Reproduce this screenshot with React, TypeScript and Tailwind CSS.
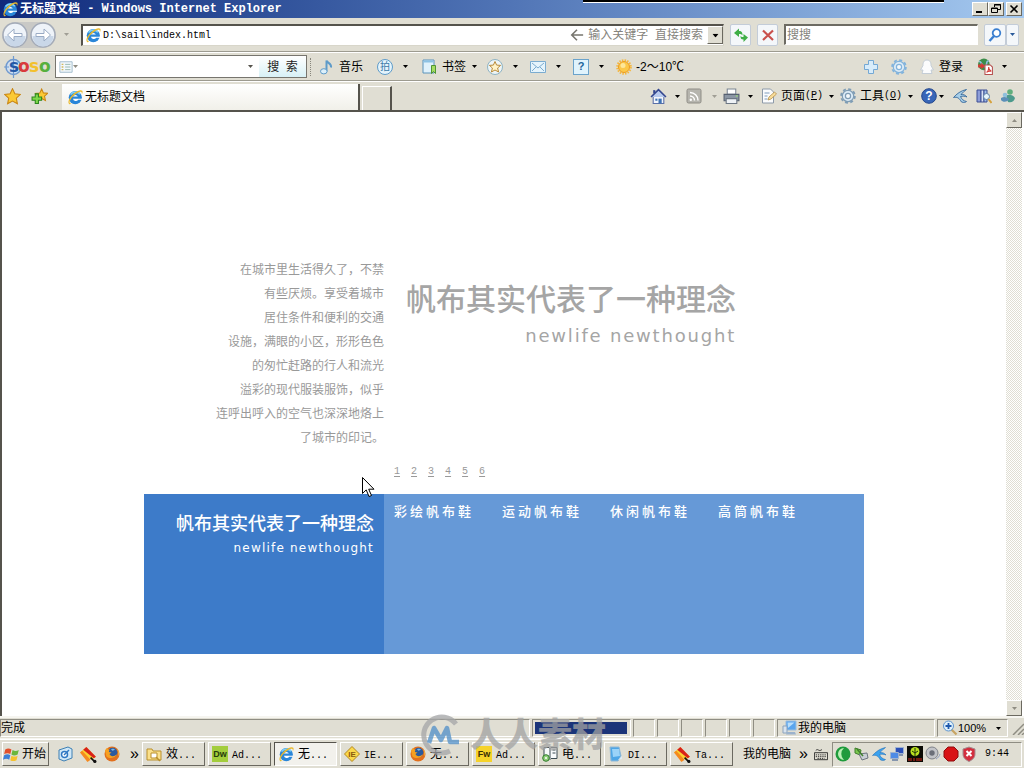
import type { ReactNode } from 'react';
import clsx from 'clsx';

const mono = "font-['Liberation_Mono','Noto_Sans_CJK_SC',monospace] text-[10px]";
const raised = 'border border-t-white border-l-white border-r-[#6b6960] border-b-[#6b6960] bg-[#e0ded3]';
const sunken = 'border border-t-[#8f8d83] border-l-[#8f8d83] border-r-white border-b-white';

function Icon({ children, className }: { children: ReactNode; className?: string }) {
  return (
    <svg viewBox="0 0 16 16" className={clsx('shrink-0', className || 'size-4')} aria-hidden="true">
      {children}
    </svg>
  );
}

function Caret({ className }: { className?: string }) {
  return (
    <svg viewBox="0 0 5 3" className={clsx('h-[3px] w-[5px] shrink-0', className || 'text-black')} aria-hidden="true">
      <path d="M0 0h5L2.5 3z" fill="currentColor" />
    </svg>
  );
}

function IeIcon({ className }: { className?: string }) {
  return (
    <Icon className={className}>
      <circle cx="8.3" cy="8.6" r="6.6" fill="#2a86d8" />
      <path d="M3.500 5.500a6 6 0 0 1 9.400-.2" stroke="#7fd0f8" strokeWidth="1.600" fill="none" />
      <path d="M6 7.600a2.500 2.300 0 0 1 4.800 0z" fill="#fff" />
      <path d="M6 9.700H15v1h-3.800a2.800 2.500 0 0 1-5.200-1z" fill="#fff" />
      <path d="M2.400 15.200C.2 13.600 2 9 6 5.200S14.300 .4 15.300 1.800c.6.900.2 2.300-.5 3.700.2-1.500 0-2.400-.8-2.700-1.600-.5-4.800 1.500-7.600 4.300S2.100 13 2.800 14c.3.500 1 .5 2 .2-1 .8-1.800 1.200-2.400 1z" fill="#e9b92d" />
    </Icon>
  );
}

function FirefoxIcon() {
  return (
    <Icon>
      <circle cx="8" cy="8" r="7.500" fill="#e2701d" />
      <circle cx="8.600" cy="6.600" r="4.800" fill="#2a5a9e" />
      <path d="M7 3.200c1.500-.9 3.500-.4 4 .6-.8.200-1.500 1-2.700 1z" fill="#79b6e4" />
      <path d="M1 4.500c.6-1 1.200-2 2.300-2.800.1 1 .9 1.700 2.200 2L4.800 6l2.700.6-2 1.500c.6 2.400 4.500 3 7.500.2C12 12 6 13.500 2.500 10.500z" fill="#f6a021" />
      <path d="M13 2.800c2 2 2.600 5.200 1.400 8 .2-3-.1-5.500-1.400-8z" fill="#fbd14c" />
    </Icon>
  );
}

function GearIcon({ stroke }: { stroke: string }) {
  return (
    <Icon>
      <circle cx="8" cy="8" r="6.900" fill="none" stroke={stroke} strokeWidth="1.800" strokeDasharray="3 2.420" />
      <circle cx="8" cy="8" r="5.700" fill="#dcebf6" stroke={stroke} strokeWidth="1.200" />
      <circle cx="8" cy="8" r="2.600" fill="#f4f8fb" stroke={stroke} strokeWidth="1.200" />
    </Icon>
  );
}

function StarIcon({ plus }: { plus?: boolean }) {
  return (
    <Icon className="size-[17px]">
      <path d={plus ? 'M10 1l1.700 3.600 4 .4-3 2.700.9 4L10 9.800l-3.500 2 .8-4-3-2.700 4-.4z' : 'M8 .6l2.200 4.800 5.300.6-3.900 3.600 1 5.300L8 12.300l-4.600 2.600 1-5.300L.5 6l5.300-.6z'} fill="#fbc934" stroke="#c98512" />
      {plus && <path d="M4 5.500h3v3h3v3H7v3H4v-3H1v-3h3z" fill="#7ed84a" stroke="#2c861d" />}
    </Icon>
  );
}

function TaskFlagIcon() {
  return (
    <Icon className="size-[17px]">
      <path d="M0 6l6-5 9 9-4 3z" fill="#fbd02f" />
      <path d="M3 3.500L6 1l9 9-2 1.500z" fill="#d8211b" />
      <path d="M0 6l2-1.500 8 8.500-3 2z" fill="#f58a1f" />
      <path d="M10 11l4 4" stroke="#111" strokeWidth="1.500" />
      <circle cx="14" cy="14.500" r="1.500" fill="#111" />
    </Icon>
  );
}

function MonitorIcon() {
  return (
    <Icon>
      <path d="M4 1h10v9H4z" fill="#5aa5ee" stroke="#9bbcdc" />
      <path d="M5.500 2.500h7L6 8z" fill="#b9defb" />
      <path d="M1 6h4v7H1z" fill="#d9e3ee" stroke="#8ba3bd" />
      <path d="M5 12h8l1 2.500H4z" fill="#9bb2cc" />
    </Icon>
  );
}

function TitleBar() {
  return (
    <header className="relative flex h-[18px] shrink-0 items-center bg-linear-to-r from-[#10297b] via-[#5175b6] to-[#a6caf0] pr-0.5 pl-0.5 text-white">
      <IeIcon />
      <h1 className="ml-0.5 flex flex-1 items-center text-xs font-bold whitespace-pre">
        无标题文档
        <span className="font-['Liberation_Mono',monospace]"> - Windows Internet Explorer</span>
      </h1>
      <div className="absolute top-0 right-20 h-[3px] w-[361px] border-b border-white bg-black" />
      <div className="flex">
        <button aria-label="最小化" className={clsx('h-3.5 w-4', raised)}>
          <svg viewBox="0 0 14 12" className="h-3 w-3.5"><path d="M3 8h6v2H3z" /></svg>
        </button>
        <button aria-label="还原" className={clsx('h-3.5 w-4', raised)}>
          <svg viewBox="0 0 14 12" className="h-3 w-3.5"><path d="M5.500 4V1.500h6v5H9M5 2h7M2.500 5h6v4.500h-6zM2 5.500h7" fill="none" stroke="#000" /></svg>
        </button>
        <button aria-label="关闭" className={clsx('ml-0.5 h-3.5 w-4', raised)}>
          <svg viewBox="0 0 14 12" className="h-3 w-3.5"><path d="M3.500 2.500l7 7m0-7l-7 7" stroke="#000" strokeWidth="1.600" /></svg>
        </button>
      </div>
    </header>
  );
}

function RoundArrow({ flip, label }: { flip?: boolean; label: string }) {
  return (
    <button aria-label={label} className="size-[26px] shrink-0">
      <svg viewBox="0 0 26 26" className="size-[26px]">
        <circle cx="13" cy="13" r="12" fill="#eef3f9" stroke="#a3abb8" strokeWidth="1.500" />
        <path d="M2.500 14a10.500 10.500 0 0 0 21 0z" fill="#c9d7e8" />
        <path
          d={flip ? 'M6 11.500h8V7l6.500 6-6.500 6v-4.500H6z' : 'M20 11.500h-8V7l-6.500 6 6.500 6v-4.500h8z'}
          fill="#fff"
          stroke="#9aabc4"
        />
      </svg>
    </button>
  );
}

function AddressBar() {
  const small = 'flex h-[22px] items-center justify-center rounded-xs border border-[#c3ccd8] bg-[#f4f7fa]';
  return (
    <div className="flex h-[34px] shrink-0 items-center border-b border-[#9d9b90] pr-[5px] pl-0.5">
      <div className="flex gap-0.5 rounded-full bg-[#c9c9c6]">
        <RoundArrow label="后退" />
        <RoundArrow flip label="前进" />
      </div>
      <Caret className="mr-3 ml-2 text-[#a09e95]" />
      <div className="flex h-[22px] flex-1 items-center border border-t-2 border-l-2 border-[#55534c] border-r-[#d8d6ca] border-b-[#d8d6ca] bg-white pl-0.5">
        <IeIcon />
        <input aria-label="地址" defaultValue="D:\sail\index.html" className={clsx('ml-0.5 min-w-0 flex-1 outline-none', mono)} />
        <Icon className="size-[14px] text-[#77756e]">
          <path d="M15 8H2M8 2L2 8l6 6" fill="none" stroke="currentColor" strokeWidth="1.800" />
        </Icon>
        <span className="mr-1 ml-1 text-xs whitespace-pre text-[#85837c]">输入关键字  直接搜索</span>
        <button aria-label="地址列表" className={clsx('flex h-[18px] w-4 items-center justify-center', raised)}>
          <Caret className="scale-125 text-black" />
        </button>
      </div>
      <button aria-label="刷新" className={clsx('ml-1.5 w-[21px]', small)}>
        <Icon>
          <path d="M1 6L6 1.500V4c3 0 3.500 1.500 3.500 4.500C8.500 7 8 7 6 7v3z" fill="#3fae46" />
          <path d="M15 10.500L10.500 15v-2.500C8 12.500 7.500 11.500 7.500 9c1 1 1.500 1 3 1V7z" fill="#3fae46" />
        </Icon>
      </button>
      <button aria-label="停止" className={clsx('ml-1.5 w-[21px]', small)}>
        <Icon><path d="M3 3.500l10 9.500M13 3.500L3 13" stroke="#c9504c" strokeWidth="2.200" /></Icon>
      </button>
      <input
        aria-label="搜搜"
        placeholder="搜搜"
        className="ml-1.5 h-[21px] w-[194px] border border-t-2 border-l-2 border-[#6d6b63] border-r-white border-b-white bg-white pl-px text-xs outline-none placeholder:text-[#85837c]"
      />
      <button aria-label="搜索" className={clsx('ml-1.5 w-[22px]', small)}>
        <Icon>
          <circle cx="9.500" cy="6" r="3.800" fill="#fff" stroke="#3b7fd0" strokeWidth="1.800" />
          <path d="M7 9l-4.500 5" stroke="#3b7fd0" strokeWidth="2.400" />
        </Icon>
      </button>
      <button aria-label="搜索选项" className={clsx('w-[13px]', small)}>
        <Caret className="text-[#2a5a9a]" />
      </button>
    </div>
  );
}

function SosoBar() {
  return (
    <div className="flex h-[29px] shrink-0 items-center border-t border-b border-t-white border-b-[#9d9b90] pr-[17px] pl-1 text-xs">
      <div className="flex h-6 w-[51px] items-center">
        <svg viewBox="0 0 48 22" className="h-[22px] w-12" role="img" aria-label="SOSO">
          <circle cx="9.500" cy="11" r="7.500" fill="#cfe0f3" stroke="#6f99cf" strokeWidth="1.500" />
          <path d="M9.500 0v22M0 11h5" stroke="#6f99cf" strokeWidth="1.200" />
          <text y="16" fontFamily="DejaVu Sans" fontWeight="bold" fontSize="17">
            <tspan x="5" fill="#2458a6">s</tspan>
            <tspan x="14" fill="#d93a3c">o</tspan>
            <tspan x="25" fill="#f3c02c">s</tspan>
            <tspan x="35" fill="#57b03d">o</tspan>
          </text>
        </svg>
      </div>
      <div className="flex h-[23px] w-[252px] items-center border border-[#77756e] bg-white pl-[3px]">
        <Icon className="size-3.5">
          <path d="M1 2h14v12H1z" fill="#f1f7fb" stroke="#9ab7c8" />
          <path d="M3 5h2M3 8h2M3 11h2" stroke="#d2b75a" strokeWidth="1.500" />
          <path d="M7 5h6M7 8h6M7 11h6" stroke="#8fb4a8" />
        </Icon>
        <Caret className="text-[#8f8d83]" />
        <input aria-label="搜搜搜索" className="min-w-0 flex-1 outline-none" />
        <Caret className="mr-1.5 text-[#55534c]" />
        <button className="h-[21px] w-[47px] bg-linear-to-b from-white to-[#d8f1f6] text-xs whitespace-pre text-[#222]">搜  索</button>
      </div>
      <div className="ml-[3px] h-[18px] border-l border-dotted border-[#88867c]" />
      <button className="ml-2 flex items-center gap-1">
        <Icon>
          <path d="M7.500 12.500V1.500c.5 2.500 5.500 3 4.500 7" fill="none" stroke="#5e9bc9" strokeWidth="2" />
          <ellipse cx="4.800" cy="12.300" rx="3.300" ry="2.600" fill="#dcf0fb" stroke="#5e9bc9" />
        </Icon>
        音乐
      </button>
      <button aria-label="拍拍" className="ml-3.5 flex items-center gap-2.5">
        <span className="flex size-4 items-center justify-center rounded-full border border-[#5e9bc9] bg-[#e4f4fc] text-[10px] text-[#3d7ba8]">拍</span>
        <Caret />
      </button>
      <button className="ml-3.5 flex items-center gap-1">
        <Icon>
          <path d="M1 1h11v13H1z" fill="#dff1fb" stroke="#5b93bb" />
          <path d="M1.500 1.500h10v2h-10z" fill="#8cc2e4" />
          <path d="M9.500 6.500h4v8l-2-2-2 2z" fill="#a5dc62" stroke="#4f9433" />
        </Icon>
        书签
        <Caret className="ml-0.5 text-black" />
      </button>
      <button aria-label="收藏" className="ml-2.5 flex items-center gap-2.5">
        <Icon>
          <circle cx="8" cy="8" r="7.500" fill="#eef5f6" stroke="#8eb3c4" />
          <path d="M8 2.500l1.600 3.600 4 .3-3 2.600 1 4L8 11l-3.600 2 1-4-3-2.600 4-.3z" fill="#fff3c8" stroke="#b98b3c" />
        </Icon>
        <Caret />
      </button>
      <button aria-label="邮件" className="ml-3 flex items-center gap-2.5">
        <Icon>
          <path d="M.5 2.500h15v11H.5z" fill="#e5f4fc" stroke="#7bacd0" />
          <path d="M2 4l6 5 6-5M2 12l4-4M14 12l-4-4" fill="none" stroke="#7bacd0" />
        </Icon>
        <Caret />
      </button>
      <button aria-label="问问" className="ml-3 flex items-center gap-2.5">
        <span className="flex size-4 items-center justify-center border border-[#6ba3cb] bg-[#e0f3fc] text-[11px] font-bold text-[#20659b]">?</span>
        <Caret />
      </button>
      <span className="ml-3 flex items-center gap-1">
        <Icon>
          <circle cx="8" cy="8" r="6.800" fill="none" stroke="#f5b73c" strokeWidth="2" strokeDasharray="1.500 1.200" />
          <circle cx="8" cy="8" r="5.500" fill="#fbc84a" stroke="#ee9c1c" />
          <circle cx="7" cy="6.500" r="2.500" fill="#fde79a" />
        </Icon>
        <span>-2～10℃</span>
      </span>
      <div className="ml-auto flex items-center gap-3">
        <button aria-label="添加" className="-ml-1">
          <Icon><path d="M5.500 1.500h5v4h4v5h-4v4h-5v-4h-4v-5h4z" fill="#d8ecfa" stroke="#74a8d4" /></Icon>
        </button>
        <button aria-label="设置"><GearIcon stroke="#82b3dc" /></button>
        <button className="flex items-center gap-1">
          <Icon>
            <path d="M8 1C4.500 1 4 4 4 6.500L1.500 11 4 11l-1 3.500h10L12 11l2.500 0L12 6.500C12 4 11.500 1 8 1z" fill="#fbfcfd" stroke="#c4cdd6" />
          </Icon>
          登录
        </button>
        <button aria-label="转换" className="ml-0.5 flex items-center gap-2">
          <Icon className="size-[17px]">
            <circle cx="6.500" cy="6" r="5.500" fill="#3c8d4a" />
            <path d="M2 3c3 1 2 4 5 5s1-6 4-5" stroke="#8fc0e0" strokeWidth="1.500" fill="none" />
            <path d="M7.500 6.500h5l2 2v7h-7z" fill="#fff" stroke="#b5504e" />
            <path d="M9 13.500c2-1 2-4 2-5 0 2 1 3.500 2.500 4-1.500-.3-3.500 0-4.500 1z" fill="none" stroke="#d63b36" />
            <path d="M1 6h3V4.500L7.500 7.500 4 10.500V9H1z" fill="#d63b36" />
          </Icon>
          <Caret />
        </button>
      </div>
    </div>
  );
}

function CommandBar() {
  return (
    <div className="flex h-[29px] shrink-0 items-center border-t border-white pr-2 pl-1 text-xs">
      <button aria-label="收藏中心"><StarIcon /></button>
      <button aria-label="添加到收藏夹" className="ml-2.5"><StarIcon plus /></button>
      <div className="ml-3.5 flex h-[26px] w-[298px] items-center gap-0.5 self-end border-r-2 border-[#55534c] bg-linear-to-b from-white to-[#f1f0e9] pl-[5px]">
        <IeIcon />
        无标题文档
      </div>
      <button aria-label="新选项卡" className="ml-0.5 h-6 w-[30px] self-end border-t border-r-2 border-l border-t-white border-r-[#55534c] border-l-white" />
      <div className="ml-auto flex items-center">
        <button aria-label="主页" className="flex items-center gap-2">
          <Icon className="size-[17px]">
            <path d="M3 8v6.500h10V8" fill="#f3f6fc" stroke="#5b70a8" />
            <path d="M1 8.500L8 1.500l7 7" fill="#b9cbee" stroke="#34478f" strokeWidth="1.500" />
            <path d="M3 2h2v3H3z" fill="#34478f" />
            <path d="M8 10h3v4.500H8z" fill="#3e73b5" />
            <path d="M5 10h2v2H5z" fill="#3e73b5" />
          </Icon>
          <Caret />
        </button>
        <button aria-label="订阅源" className="ml-1.5 flex items-center gap-2.5">
          <Icon>
            <rect x="1" y="1" width="14" height="14" rx="1.500" fill="#b6b5ae" stroke="#8f8d86" />
            <path d="M4 8a4.500 4.500 0 0 1 4.500 4.500M4 4.500a8 8 0 0 1 8 8" fill="none" stroke="#fff" strokeWidth="1.500" />
            <circle cx="4.800" cy="11.700" r="1.200" fill="#fff" />
          </Icon>
          <Caret className="text-[#a09e95]" />
        </button>
        <button aria-label="打印" className="ml-1.5 flex items-center gap-2">
          <Icon className="size-[17px]">
            <path d="M4 1h8v5H4z" fill="#fff" stroke="#7d8794" />
            <path d="M1 6h14v6H1z" fill="#8b96a4" stroke="#566070" />
            <path d="M3 10h10v4.500H3z" fill="#eef2f6" stroke="#6d7784" />
            <path d="M12 7.500h2" stroke="#9be06e" />
          </Icon>
          <Caret />
        </button>
        <button className="ml-2 flex items-center">
          <Icon>
            <path d="M1.500 1h8l3 3v11h-11z" fill="#fbfcfd" stroke="#8d9aa9" />
            <path d="M3.500 5h5M3.500 8h3M3.500 11h3" stroke="#7f9cbc" />
            <path d="M7 12l1-3 5.500-5 2 2-5.500 5z" fill="#f8dc9a" stroke="#b8924a" strokeWidth=".8" />
          </Icon>
          <span className="ml-1">页面</span>
          <span className={mono}>(<u>P</u>)</span>
          <Caret className="ml-1.5 text-black" />
        </button>
        <button className="ml-1.5 flex items-center">
          <GearIcon stroke="#7f9db5" />
          <span className="ml-1">工具</span>
          <span className={mono}>(<u>O</u>)</span>
          <Caret className="ml-1.5 text-black" />
        </button>
        <button aria-label="帮助" className="ml-2 flex items-center gap-0.5">
          <Icon>
            <circle cx="8" cy="8" r="7.300" fill="#3866b8" stroke="#24478c" />
            <text x="8" y="12" textAnchor="middle" fontFamily="Liberation Sans" fontWeight="bold" fontSize="12" fill="#fff">?</text>
          </Icon>
          <Caret />
        </button>
        <button aria-label="迅雷" className="ml-2">
          <Icon>
            <path d="M14.500 1.500C9 2.500 4.500 6 1.500 9.500c4-1 6 1 8 4.500 2.500.8 4 .5 5-.5-3-.5-5-2.500-6-5C10.500 8 13 8 15 9c-1.500-2-4-2.800-6-2.500 1.500-2 3.500-3.500 5.500-5z" fill="#a8cfe8" stroke="#35689b" strokeWidth=".9" />
          </Icon>
        </button>
        <button aria-label="信息检索" className="ml-2">
          <Icon>
            <path d="M1 2h4v12H1z" fill="#8d9dd8" stroke="#3d4f94" />
            <path d="M5 2h3v12H5z" fill="#d9e2f4" stroke="#3d4f94" />
            <path d="M8 2h3v12H8z" fill="#9dbce8" stroke="#3d4f94" />
            <circle cx="10.500" cy="8.500" r="3" fill="#e7f4fb" stroke="#5d7fa3" />
            <path d="M12.500 11l3 4" stroke="#d6a23c" strokeWidth="2" />
          </Icon>
        </button>
        <button aria-label="Messenger" className="ml-2">
          <Icon>
            <circle cx="10" cy="4" r="2.800" fill="#5fae7c" />
            <path d="M6 7c3 0 7-1 9 3-1 4-4 5-7 4z" fill="#4c9a8c" />
            <circle cx="5" cy="7" r="2.300" fill="#8fc0dc" />
            <path d="M1 10c3-2 6-1 8 1-1 3-6 4-8 1z" fill="#5b8fb8" />
          </Icon>
        </button>
      </div>
    </div>
  );
}

const lines = [
  '在城市里生活得久了，不禁',
  '有些厌烦。享受着城市',
  '居住条件和便利的交通',
  '设施，满眼的小区，形形色色',
  '的匆忙赶路的行人和流光',
  '溢彩的现代服装服饰，似乎',
  '连呼出呼入的空气也深深地烙上',
  '了城市的印记。',
];

const pages = ['1', '2', '3', '4', '5', '6'];
const products = ['彩绘帆布鞋', '运动帆布鞋', '休闲帆布鞋', '高筒帆布鞋'];

function SailPage() {
  return (
    <main className="mx-auto w-[720px] max-w-full">
      <section className="flex">
        <p className="w-1/3 pt-[146px] text-right text-xs leading-6 text-[#999]">
          {lines.map((line) => (
            <span key={line} className="block whitespace-nowrap">{line}</span>
          ))}
        </p>
        <div className="flex flex-1 flex-col pt-[166px]">
          <div className="w-[352px] pl-5 text-right text-[#a5a5a5]">
            <h2 className="text-[30px] leading-[44px] font-medium whitespace-nowrap">帆布其实代表了一种理念</h2>
            <p className="font-['DejaVu_Sans',sans-serif] text-lg leading-7 tracking-widest whitespace-nowrap">newlife newthought</p>
          </div>
          <nav className={clsx('mt-[112px] flex gap-[11px] pb-3 pl-2.5 leading-5 text-[#999]', mono)}>
            {pages.map((page) => (
              <a key={page} href={`#${page}`} className="underline underline-offset-2">{page}</a>
            ))}
          </nav>
        </div>
      </section>
      <section className="flex min-h-40 bg-[#6699d7] text-white">
        <div className="w-1/3 bg-[#3d7bc9] pt-4 pr-2.5 text-right">
          <h2 className="text-lg leading-7 font-medium whitespace-nowrap">帆布其实代表了一种理念</h2>
          <p className="font-['DejaVu_Sans',sans-serif] text-xs leading-5 tracking-widest">newlife newthought</p>
        </div>
        <nav className="flex gap-[28px] pt-2 pl-2.5 text-[13px] leading-5 font-medium tracking-[3px]">
          {products.map((name) => (
            <a key={name} href={`#${name}`}>{name}</a>
          ))}
        </nav>
      </section>
    </main>
  );
}

function Viewport() {
  return (
    <div className="flex min-h-0 flex-1 border-t-2 border-l-2 border-[#55534c] bg-white pr-0.5">
      <div className="min-w-0 flex-1 overflow-hidden">
        <SailPage />
      </div>
      <div className="flex w-4 flex-col justify-between bg-[repeating-conic-gradient(#ffffff_0_25%,#e0ded3_0_50%)] bg-size-[2px_2px]">
        <button aria-label="向上滚动" className={clsx('flex h-4 items-center justify-center', raised)}>
          <Caret className="rotate-180 text-[#8f8d83]" />
        </button>
        <button aria-label="向下滚动" className={clsx('flex h-4 items-center justify-center', raised)}>
          <Caret className="text-[#8f8d83]" />
        </button>
      </div>
    </div>
  );
}

function StatusBar() {
  return (
    <footer className="flex h-[23px] shrink-0 gap-0.5 border-t-2 border-b border-[#f6f5f0] py-px text-xs">
      <div className={clsx('flex flex-1 items-center', sunken)}>完成</div>
      <div className={clsx('w-[99px] p-0.5', sunken)}>
        <div className="h-full w-[92px] bg-[#1b3479]" />
      </div>
      {[0, 1, 2, 3, 4, 5].map((pane) => (
        <div key={pane} className={clsx('w-[22px]', sunken)} />
      ))}
      <div className={clsx('flex w-[158px] items-center pl-1', sunken)}>
        <MonitorIcon />
        我的电脑
      </div>
      <button className={clsx('flex w-[71px] items-center pl-1', sunken)}>
        <Icon>
          <path d="M9.500 9.500l5 5" stroke="#c7a463" strokeWidth="2.200" />
          <circle cx="6.500" cy="6" r="5" fill="#dff0fb" stroke="#5c94cf" />
          <path d="M6.500 3v6M3.500 6h6" stroke="#1e59ad" strokeWidth="1.800" />
        </Icon>
        <span className="text-[11px]">100%</span>
        <Caret className="mr-1.5 ml-auto text-black" />
      </button>
      <svg viewBox="0 0 14 16" className="h-4 w-3.5" aria-hidden="true">
        <path d="M3 16L14 5M8 16l6-6M12 16l2-2" stroke="#8f8d83" strokeWidth="1.500" />
      </svg>
    </footer>
  );
}

const tasks = [
  {
    cjk: '效', latin: '...',
    icon: (
      <Icon>
        <path d="M1 3h5l1 2h8v9H1z" fill="#fbe08a" stroke="#b98f2c" />
        <path d="M5 7h6v5H5z" fill="#fff" stroke="#b98f2c" />
        <path d="M10 11l4 4" stroke="#b98f2c" strokeWidth="1.500" />
      </Icon>
    ),
  },
  {
    cjk: '', latin: 'Ad...',
    icon: <span className="flex size-4 items-center justify-center bg-[#a3cd3c] text-[9px] font-bold text-[#263c0c]">Dw</span>,
  },
  { cjk: '无', latin: '...', icon: <IeIcon />, active: true },
  {
    cjk: '', latin: 'IE...',
    icon: (
      <Icon>
        <path d="M8 .5L15.500 8 8 15.500.5 8z" fill="#fbd84a" stroke="#b3861a" />
        <text x="8" y="11" textAnchor="middle" fontFamily="Liberation Sans" fontWeight="bold" fontSize="8" fill="#8a5a10">IE</text>
      </Icon>
    ),
  },
  { cjk: '无', latin: '...', icon: <FirefoxIcon /> },
  {
    cjk: '', latin: 'Ad...',
    icon: <span className="flex size-4 items-center justify-center bg-[#f6d32a] text-[9px] font-bold text-[#3b2f05]">Fw</span>,
  },
  {
    cjk: '电', latin: '...',
    icon: (
      <Icon>
        <path d="M2 1.500h5l1 1 1-1h6v11H9l-1 1-1-1H2z" fill="#f7fafb" stroke="#3b4b52" />
        <path d="M8 2.500v10M10.500 4h3M10.500 7h3" stroke="#3b4b52" />
        <circle cx="4" cy="12" r="3.300" fill="#8fce7a" stroke="#2e7a2a" />
        <circle cx="4" cy="12" r="1" fill="#fff" />
      </Icon>
    ),
  },
  {
    cjk: '', latin: 'DI...',
    icon: (
      <Icon>
        <path d="M2 1h9l2 9-3 5H3z" fill="#4ea6e6" stroke="#8fb8d6" />
        <path d="M4 3h7l1 7-7 1z" fill="#9bd3f8" />
        <path d="M10 14l4-4v3z" fill="#dcecf7" />
      </Icon>
    ),
  },
  { cjk: '', latin: 'Ta...', icon: <TaskFlagIcon /> },
];

function TrayIcons() {
  return (
    <>
      <Icon>
        <circle cx="8" cy="8" r="7.500" fill="#1f9b3c" />
        <path d="M9 2a6 6 0 1 0 0 12 8 8 0 0 1 0-12z" fill="#b9f0b5" />
      </Icon>
      <Icon>
        <path d="M2 2l6 2-1 5-5-2z" fill="#7bc74f" stroke="#3f7f2c" />
        <path d="M6 8l8-1 1 5-6 2z" fill="#c9ced4" stroke="#6d757e" />
        <path d="M4 3l6 7" stroke="#3f7f2c" strokeWidth="1.500" />
      </Icon>
      <Icon>
        <path d="M14.500 1.500C9 2.500 4.500 6 1.500 9.500c4-1 6 1 8 4.500 2.500.8 4 .5 5-.5-3-.5-5-2.500-6-5C10.500 8 13 8 15 9c-1.500-2-4-2.800-6-2.500 1.500-2 3.500-3.500 5.500-5z" fill="#3aa2ee" stroke="#2270b8" strokeWidth=".6" />
      </Icon>
      <Icon>
        <path d="M6.500 1.500h8v6h-8z" fill="#2b50b8" stroke="#9fb2d0" />
        <path d="M1.500 6.500h8v6h-8z" fill="#4e8be6" stroke="#9fb2d0" />
        <path d="M3 14h6M10 9h4" stroke="#8595ad" strokeWidth="2" />
      </Icon>
      <Icon>
        <path d="M0 0h16v16H0z" fill="#0b0b05" />
        <circle cx="8" cy="5.500" r="4.500" fill="#b9df21" />
        <path d="M8 2v9M5 5l3 2 3-2" fill="none" stroke="#20300a" />
        <path d="M2 12v3M4 12v3M7 12v3M10 12v3M12 12v3M14 12v3" stroke="#d8261c" />
      </Icon>
      <Icon>
        <circle cx="7" cy="7" r="6" fill="#c2c4c8" stroke="#7f8289" />
        <circle cx="7" cy="7" r="2.700" fill="#6b6f78" />
        <path d="M11 13c2-1 3.500-3 4-5" fill="none" stroke="#8c9bc2" />
      </Icon>
      <Icon>
        <path d="M5 1h6l4 4v6l-4 4H5l-4-4V5z" fill="#d81315" stroke="#8f0d0e" />
      </Icon>
      <Icon>
        <path d="M8 1l6 2v5c0 4-3 6-6 7.500C5 14 2 12 2 8V3z" fill="#d32f3e" stroke="#a38d90" />
        <path d="M5.500 5l5 5M10.500 5l-5 5" stroke="#fff" strokeWidth="2" />
      </Icon>
    </>
  );
}

function TaskBar() {
  return (
    <nav className="flex h-[29px] shrink-0 items-center border-t border-white pr-0.5 pl-0.5 text-xs">
      <button className={clsx('flex h-6 w-[47px] items-center gap-px whitespace-nowrap', raised)}>
        <Icon className="size-[18px]">
          <path d="M2 4c2-1.500 4-1 5.500 0L6.500 8C5 7 3 7 1 8z" fill="#e2502c" />
          <path d="M8.500 4.500c2 1 3.500 1 5.500 0l-1 4c-2 1-4 1-5.500 0z" fill="#6ab73b" />
          <path d="M1 9c2-1 4-1 5.500 0l-1 4C4 12 2 12 0 13z" fill="#3d7fd6" />
          <path d="M7.500 9.500c2 1 3.500 1 5.500 0l-1 4c-2 1-4 1-5.500 0z" fill="#f5c22c" />
        </Icon>
        开始
      </button>
      <div className="ml-2 flex items-center gap-[7px]">
        <button aria-label="桌面">
          <Icon>
            <path d="M2 4l9-3 4 2v9l-8 3-5-2z" fill="#cfe7f7" stroke="#3d7fb3" />
            <circle cx="7.500" cy="8.500" r="3" fill="#fff" stroke="#2f78c4" strokeWidth="1.500" />
            <path d="M7 9l5-5" stroke="#2f78c4" strokeWidth="1.500" />
          </Icon>
        </button>
        <button aria-label="任务"><TaskFlagIcon /></button>
        <button aria-label="Firefox"><FirefoxIcon /></button>
      </div>
      <span className="ml-2.5 w-3 text-base leading-4">»</span>
      <div className="flex gap-[3px]">
        {tasks.map((task, i) => (
          <button
            key={i}
            className={clsx(
              'flex h-6 w-[63px] items-center gap-1 border pl-[3px] whitespace-nowrap',
              task.active
                ? 'border-t-[#55534c] border-r-white border-b-white border-l-[#55534c] bg-[#f2f1ec]'
                : 'border-t-white border-r-[#6b6960] border-b-[#6b6960] border-l-white',
            )}
          >
            {task.icon}
            <span>
              {task.cjk}
              <span className={mono}>{task.latin}</span>
            </span>
          </button>
        ))}
      </div>
      <span className="ml-auto whitespace-nowrap">我的电脑</span>
      <span className="ml-2 text-base leading-4">»</span>
      <Icon className="mr-1 ml-1.5 size-3.5">
        <path d="M.5 6.500h15v8H.5zM2 4c3-3 3 2 7-1" fill="none" stroke="#222" />
        <path d="M2 9h12M2 11h12M4 13h8" stroke="#222" strokeDasharray="1.500 1" />
      </Icon>
      <div className={clsx('flex h-[25px] w-[190px] items-center gap-0.5 pl-0.5', sunken)}>
        <TrayIcons />
        <time className={clsx('ml-auto pr-3', mono)}>9:44</time>
      </div>
    </nav>
  );
}

function Watermark() {
  return (
    <div className="pointer-events-none absolute bottom-3 left-[420px] flex items-center gap-2 opacity-75">
      <svg viewBox="0 0 42 42" className="size-[42px]" aria-hidden="true">
        <path d="M36 10A18 18 0 1 0 30 37" fill="none" stroke="#a4a5a8" strokeWidth="5" />
        <path d="M9 29l5-15 7 12 6-12 3 14h9" fill="none" stroke="#4f8fc9" strokeWidth="4.500" strokeLinejoin="round" />
      </svg>
      <span className="text-[34px] leading-10 font-black text-[#a2a2a2]">人人素材</span>
    </div>
  );
}

function Cursor() {
  return (
    <svg viewBox="0 0 13 21" className="absolute top-[477px] left-[362px] h-[21px] w-[13px]" aria-hidden="true">
      <path d="M.5.500v16l3.700-3.600L7 19.500l2.500-1-2.800-6.300H12z" fill="#fff" stroke="#000" />
    </svg>
  );
}

export default function App() {
  return (
    <div className="relative flex h-screen flex-col overflow-hidden bg-[#e0ded3] font-['Liberation_Sans','Noto_Sans_CJK_SC',sans-serif] text-black">
      <TitleBar />
      <AddressBar />
      <SosoBar />
      <CommandBar />
      <Viewport />
      <StatusBar />
      <TaskBar />
      <Watermark />
      <Cursor />
    </div>
  );
}
